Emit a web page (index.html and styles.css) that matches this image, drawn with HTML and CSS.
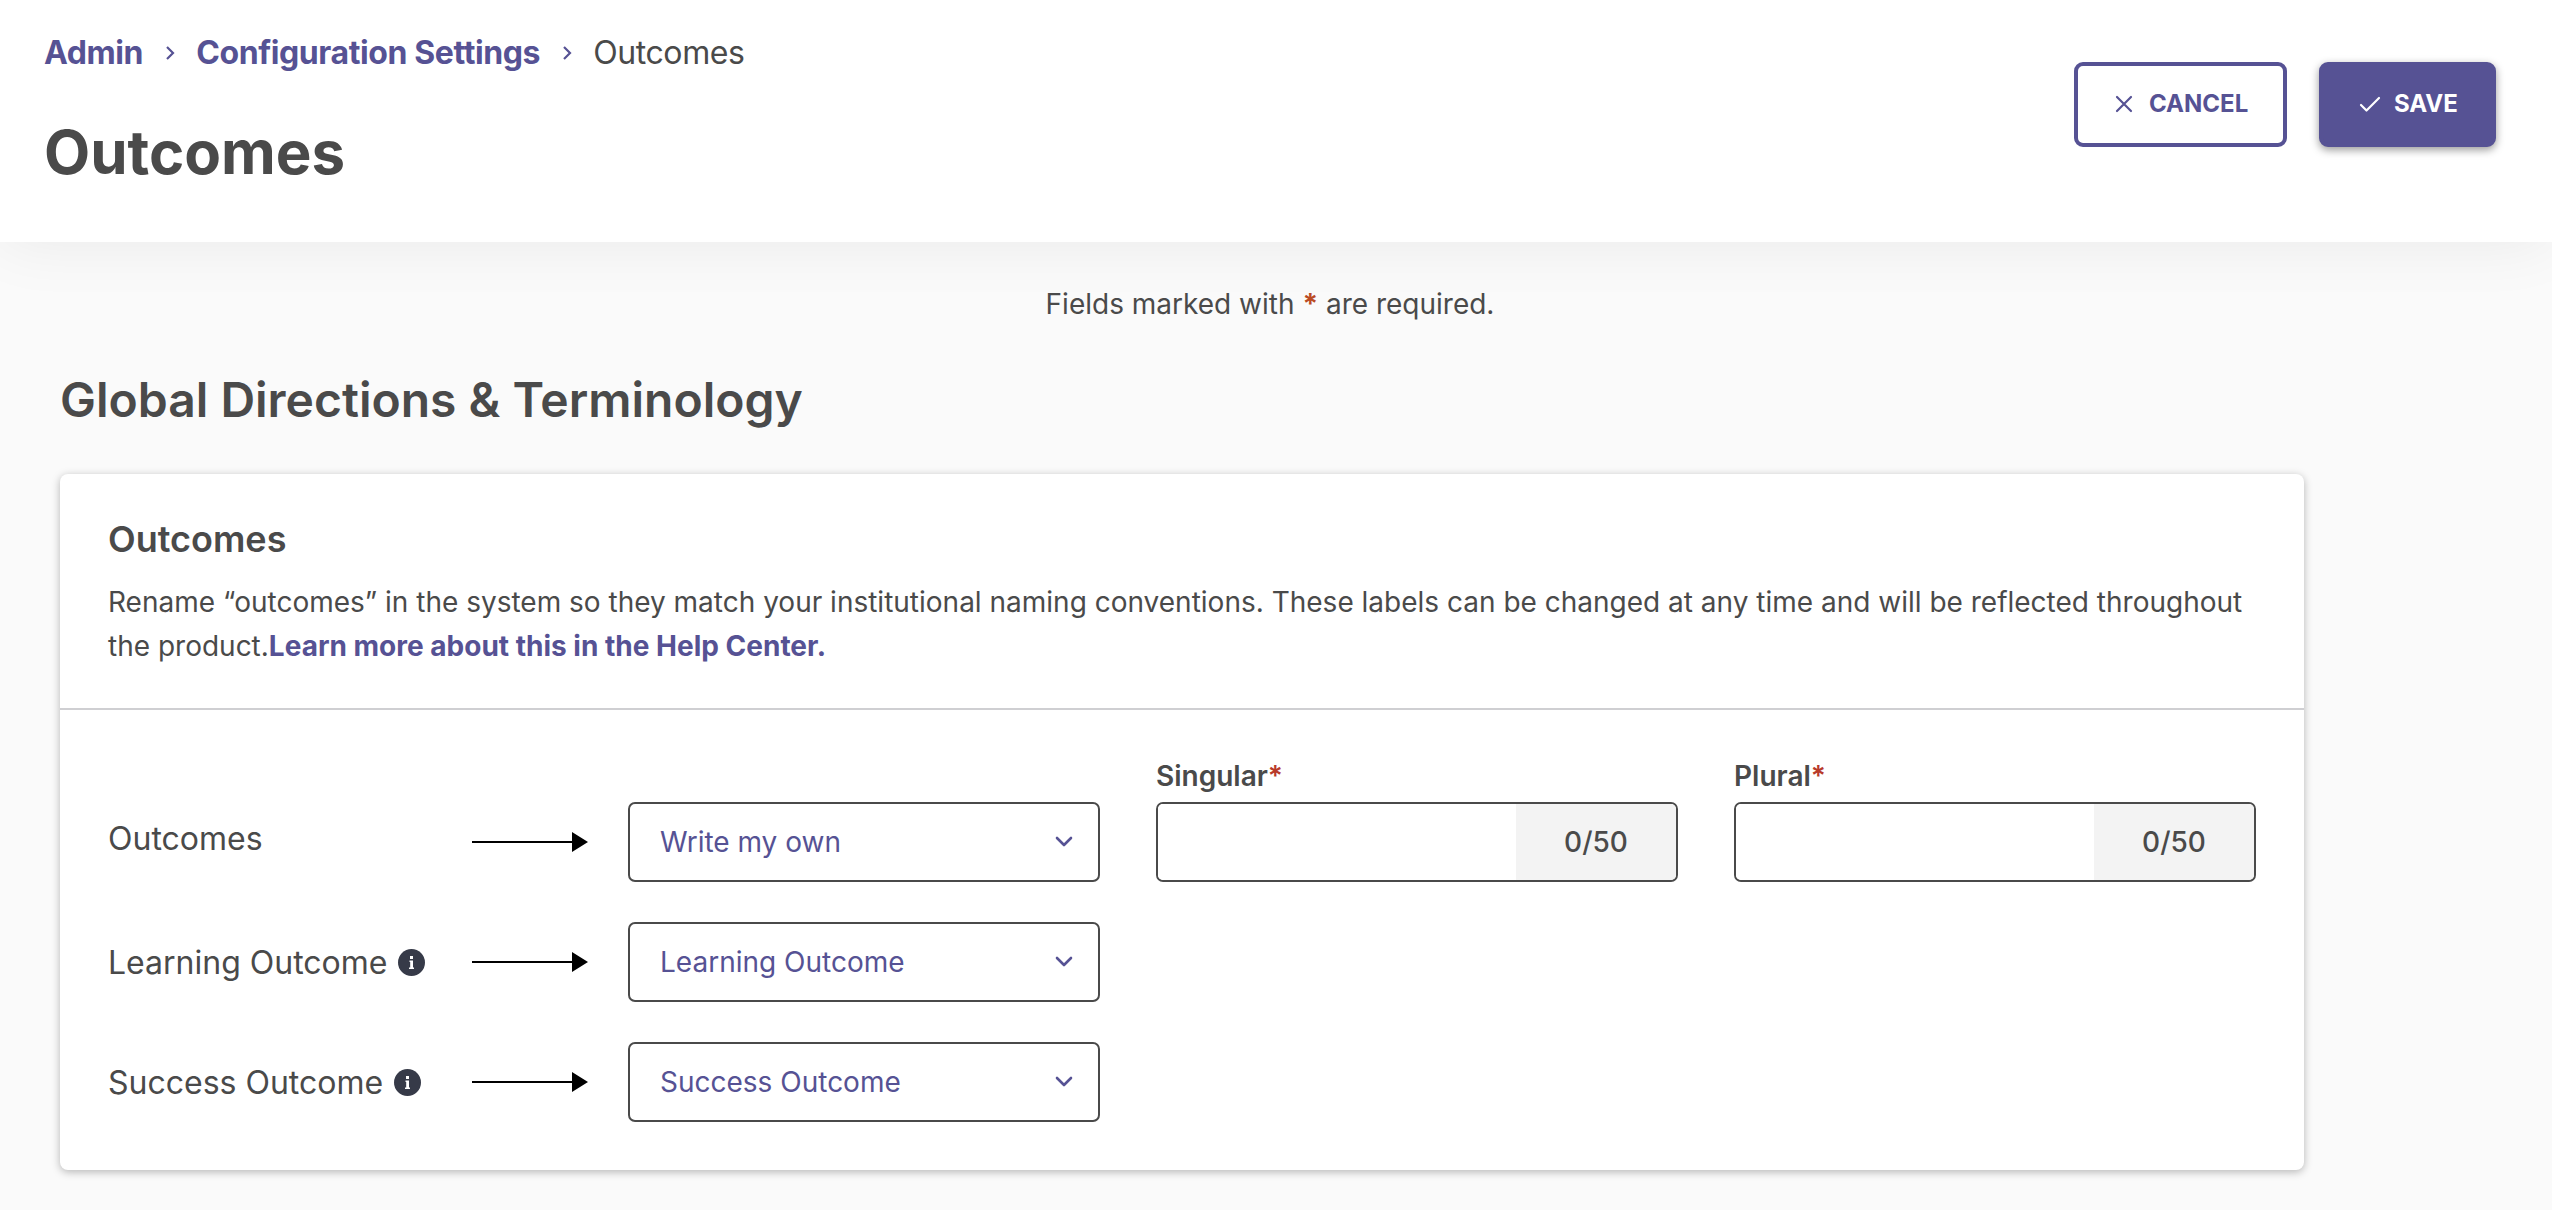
FILE: index.html
```html
<!DOCTYPE html>
<html lang="en">
<head>
  <meta charset="utf-8">
  <title>Outcomes</title>
  <link rel="stylesheet" href="styles.css">
</head>
<body>
  <header class="page-header">
    <div class="header-left">
      <nav class="breadcrumb">
        <a href="#">Admin</a>
        <svg class="crumb-sep" width="10" height="16" viewBox="0 0 10 16"><path d="M2 2l6 6-6 6" /></svg>
        <a href="#" class="crumb-config">Configuration Settings</a>
        <svg class="crumb-sep" width="10" height="16" viewBox="0 0 10 16"><path d="M2 2l6 6-6 6" /></svg>
        <span class="crumb-current">Outcomes</span>
      </nav>
      <h1 class="page-title">Outcomes</h1>
    </div>
    <div class="header-actions">
      <button type="button" class="btn btn-cancel">
        <svg width="18" height="18" viewBox="0 0 18 18"><path d="M2 2l14 14M16 2L2 16" /></svg>
        <span>CANCEL</span>
      </button>
      <button type="button" class="btn btn-save">
        <svg width="22" height="18" viewBox="0 0 22 18"><path d="M2 10l5.500 5.500L20 3" /></svg>
        <span>SAVE</span>
      </button>
    </div>
  </header>

  <main class="content">
    <p class="required-note">Fields marked with <span class="star">*</span> are required.</p>
    <h2 class="section-title">Global Directions &amp; Terminology</h2>

    <section class="card">
      <div class="card-header">
        <h3 class="card-title">Outcomes</h3>
        <p class="card-text">Rename “outcomes” in the system so they match your institutional naming conventions. These labels can be changed at any time and will be reflected throughout the product.<a href="#">Learn more about this in the Help Center.</a></p>
      </div>

      <div class="card-body">
        <div class="term-row term-row-first">
          <div class="term-label"><span class="term-name">Outcomes</span></div>
          <svg class="arrow" width="116" height="20" viewBox="0 0 116 20"><path d="M0 9h100V0l16 10-16 10v-9H0z" /></svg>
          <div class="select">
            <span>Write my own</span>
            <svg class="chevron" width="20" height="14" viewBox="0 0 20 14"><path d="M3 3l7 7 7-7" /></svg>
          </div>
          <div class="field">
            <label for="singular">Singular<span class="req">*</span></label>
            <div class="input-group">
              <input type="text" id="singular" maxlength="50">
              <span class="counter">0/50</span>
            </div>
          </div>
          <div class="field">
            <label for="plural">Plural<span class="req">*</span></label>
            <div class="input-group">
              <input type="text" id="plural" maxlength="50">
              <span class="counter">0/50</span>
            </div>
          </div>
        </div>

        <div class="term-row">
          <div class="term-label">
            <span class="term-name">Learning Outcome</span>
            <svg class="info" width="27" height="27" viewBox="0 0 27 27"><circle cx="13.500" cy="13.500" r="13.500" /><path d="M11.500 11.500h3.500v7h1v1.500h-5v-1.500h1.200v-5.500h-0.700zM12 7h3v3h-3z" /></svg>
          </div>
          <svg class="arrow" width="116" height="20" viewBox="0 0 116 20"><path d="M0 9h100V0l16 10-16 10v-9H0z" /></svg>
          <div class="select">
            <span>Learning Outcome</span>
            <svg class="chevron" width="20" height="14" viewBox="0 0 20 14"><path d="M3 3l7 7 7-7" /></svg>
          </div>
        </div>

        <div class="term-row">
          <div class="term-label">
            <span class="term-name">Success Outcome</span>
            <svg class="info" width="27" height="27" viewBox="0 0 27 27"><circle cx="13.500" cy="13.500" r="13.500" /><path d="M11.500 11.500h3.500v7h1v1.500h-5v-1.500h1.200v-5.500h-0.700zM12 7h3v3h-3z" /></svg>
          </div>
          <svg class="arrow" width="116" height="20" viewBox="0 0 116 20"><path d="M0 9h100V0l16 10-16 10v-9H0z" /></svg>
          <div class="select">
            <span>Success Outcome</span>
            <svg class="chevron" width="20" height="14" viewBox="0 0 20 14"><path d="M3 3l7 7 7-7" /></svg>
          </div>
        </div>
      </div>
    </section>
  </main>
</body>
</html>
```

FILE: styles.css
```css
* {
  box-sizing: border-box;
}

body {
  margin: 0;
  min-height: 1210px;
  background: #fafafa;
  color: #4a4a4a;
  font-family: Inter, "Liberation Sans", sans-serif;
  font-size: 28px;
}

h1, h2, h3, p {
  margin: 0;
}

a {
  color: #565294;
  font-weight: 700;
  text-decoration: none;
}

svg {
  display: block;
  flex: none;
}

/* Header */
.page-header {
  display: flex;
  justify-content: space-between;
  align-items: flex-start;
  height: 242px;
  padding: 32px 56px 0 44px;
  background: #fff;
  box-shadow: 0 0 60px rgba(0, 0, 0, 0.07);
}

.breadcrumb {
  display: flex;
  align-items: center;
  height: 40px;
  font-size: 32px;
  letter-spacing: -0.4px;
}

.crumb-sep {
  margin: 2px 21px 0 22px;
  fill: none;
  stroke: #565294;
  stroke-width: 2.2;
}

.page-title {
  margin-top: 44px;
  font-size: 60px;
  font-weight: 700;
  line-height: 72px;
}

.header-actions {
  display: flex;
  gap: 32px;
  margin-top: 30px;
}

.btn {
  display: flex;
  align-items: center;
  height: 85px;
  padding: 0 0 2px;
  border: 4px solid #565294;
  border-radius: 9px;
  font-family: inherit;
  font-size: 24px;
  font-weight: 700;
}

.btn svg {
  fill: none;
  stroke: currentColor;
  stroke-width: 2.2;
  stroke-linecap: round;
  stroke-linejoin: round;
}

.btn-cancel {
  width: 213px;
  padding-left: 37px;
  background: #fff;
  color: #565294;
}

.btn-cancel svg {
  margin-right: 16px;
}

.btn-save {
  width: 177px;
  padding-left: 36px;
  background: #565294;
  color: #fff;
  box-shadow: 0 3px 8px rgba(0, 0, 0, 0.4);
}

.btn-save svg {
  margin-right: 13px;
}

/* Content */
.content {
  padding: 40px 248px 0 60px;
}

.required-note {
  width: 2420px;
  line-height: 44px;
  text-align: center;
}

.star {
  color: #bb4b24;
  font-weight: 700;
}

.section-title {
  margin-top: 44px;
  font-size: 48px;
  font-weight: 600;
  line-height: 60px;
}

.card {
  height: 696px;
  margin-top: 44px;
  background: #fff;
  border-radius: 8px;
  box-shadow: 0 2px 8px rgba(0, 0, 0, 0.28);
}

.card-header {
  height: 236px;
  padding: 42px 48px 0;
  border-bottom: 2px solid #cfcfd2;
}

.card-title {
  font-size: 36px;
  font-weight: 600;
  line-height: 46px;
}

.card-text {
  margin-top: 18px;
  line-height: 44px;
}

.card-body {
  display: flex;
  flex-direction: column;
  gap: 40px;
  padding: 46px 48px 0;
}

.term-row {
  display: flex;
  align-items: center;
  height: 80px;
}

.term-row-first {
  align-items: flex-end;
  height: 126px;
}

.term-row-first .arrow {
  margin-bottom: 30px;
}

.term-label {
  display: flex;
  align-items: center;
  width: 364px;
  height: 80px;
  font-size: 32px;
}

.term-row-first .term-label {
  height: 88px;
}

.info {
  margin-left: 11px;
  fill: #363a48;
}

.info path {
  fill: #fff;
}

.arrow {
  margin-right: 40px;
  fill: #000;
}

.select {
  display: flex;
  justify-content: space-between;
  align-items: center;
  width: 472px;
  height: 80px;
  padding: 0 24px 0 30px;
  border: 2px solid #4a4a4a;
  border-radius: 7px;
  color: #565294;
}

.chevron {
  fill: none;
  stroke: #565294;
  stroke-width: 2.6;
  stroke-linecap: round;
  stroke-linejoin: round;
}

.field {
  width: 522px;
  height: 128px;
  margin-left: 56px;
}

.field label {
  display: block;
  height: 48px;
  font-weight: 600;
  line-height: 44px;
}

.req {
  color: #b83a2b;
}

.input-group {
  display: flex;
  height: 80px;
  border: 2px solid #4a4a4a;
  border-radius: 7px;
  overflow: hidden;
}

.input-group input {
  flex: 1;
  min-width: 0;
  padding: 0 24px;
  border: 0;
  background: #fff;
  font: inherit;
  outline: none;
}

.counter {
  display: flex;
  align-items: center;
  justify-content: center;
  width: 160px;
  background: #f3f3f3;
  font-weight: 500;
}
```
